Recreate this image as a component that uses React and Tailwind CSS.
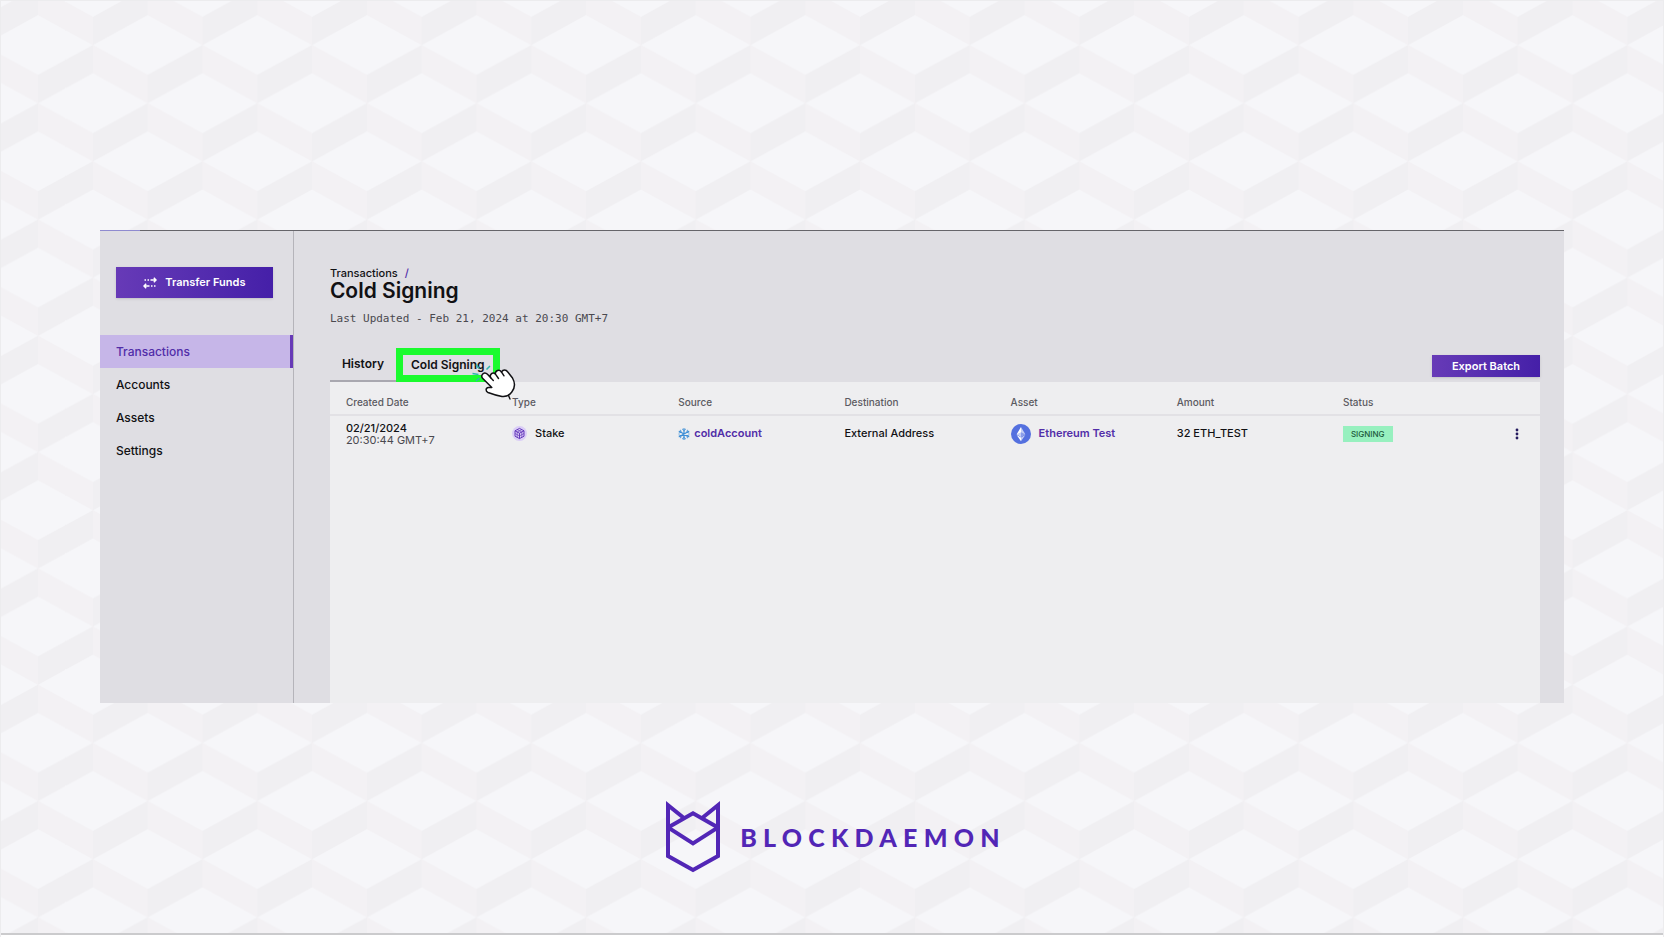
import { useState } from "react"

const navItems = ["Transactions", "Accounts", "Assets", "Settings"]

const columns = ["Created Date", "Type", "Source", "Destination", "Asset", "Amount", "Status"]

const transactions = [
  {
    date: "02/21/2024",
    time: "20:30:44 GMT+7",
    type: "Stake",
    source: "coldAccount",
    destination: "External Address",
    asset: "Ethereum Test",
    amount: "32 ETH_TEST",
    status: "SIGNING",
  },
]

function CubeBackdrop() {
  return (
    <svg className="absolute inset-0 h-full w-full" aria-hidden="true">
      <defs>
        <pattern id="cubes" x="91.9" y="14" width="109.6" height="116.3" patternUnits="userSpaceOnUse">
          <rect width="109.6" height="116.3" fill="#f6f6f9" />
          <path d="M0 30 54.8 60V88.2L0 58.2Z" fill="#f3f1f4" />
          <path d="M54.8 60 109.6 30V58.2L54.8 88.2Z" fill="#f0eff2" />
          <path d="M54.8 88.2 109.6 118.2V146.4L54.8 116.4Z" fill="#f3f1f4" />
          <path d="M0 118.2 54.8 88.2V116.4L0 146.4Z" fill="#f0eff2" />
          <path d="M54.8 -28.1 109.6 1.9V30L54.8 0Z" fill="#f3f1f4" />
          <path d="M0 1.9 54.8 -28.1V0L0 30Z" fill="#f0eff2" />
        </pattern>
      </defs>
      <rect width="100%" height="100%" fill="url(#cubes)" />
    </svg>
  )
}

function TransferIcon() {
  return (
    <svg width="14" height="12" viewBox="0 0 14 12" fill="none" stroke="white" strokeWidth="1.5" aria-hidden="true">
      <path d="M7.5 3H13M10.8 0.8 13 3 10.800 5.200" />
      <path d="M6.500 9H1M3.200 6.800 1 9l2.200 2.200" />
      <path d="M1.500 3H3M4.500 3H6M8 9H9.500M11 9H12.500" />
    </svg>
  )
}

function StakeIcon() {
  return (
    <svg width="15" height="15" viewBox="0 0 15 15" fill="none" aria-hidden="true">
      <circle cx="7.5" cy="7.5" r="7.5" fill="#dacdf6" />
      <g stroke="#5a2bb5" strokeWidth="0.9" strokeLinejoin="round">
        <path d="M7.5 2.4 12 4.8V10.2L7.5 12.6 3 10.2V4.8Z" />
        <path d="M3 4.8 7.5 7.2 12 4.8M7.5 7.2V12.6" />
        <path d="M5.2 3.6 9.8 6V11.4M9.8 3.6 5.2 6V11.4M3 7.5 7.5 9.9 12 7.5" strokeWidth="0.6" />
      </g>
    </svg>
  )
}

function SnowflakeIcon() {
  return (
    <svg width="12" height="12" viewBox="0 0 12 12" fill="none" stroke="#3f8fd6" strokeLinecap="round" aria-hidden="true">
      <path d="M6 0.6V11.4M1.2 3.3 10.8 8.7M10.8 3.3 1.2 8.7" strokeWidth="1.2" />
      <path
        d="M4.4 1.2 6 2.6 7.6 1.2M4.4 10.8 6 9.4 7.6 10.8M1 5 3.1 4.3 2.6 2.2M11 7 8.9 7.7 9.4 9.8M11 5 8.9 4.3 9.4 2.2M1 7 3.1 7.7 2.6 9.8"
        strokeWidth="0.9"
      />
    </svg>
  )
}

function EthereumIcon() {
  return (
    <svg width="20" height="20" viewBox="0 0 20 20" aria-hidden="true">
      <circle cx="10" cy="10" r="10" fill="#5470df" />
      <path d="M10 3 5.7 10.2 10 12.7Z" fill="white" />
      <path d="M10 3 14.3 10.2 10 12.7Z" fill="#c4cef5" />
      <path d="M10 8.2 5.7 10.2 10 12.7Z" fill="#c4cef5" />
      <path d="M10 8.2 14.3 10.2 10 12.7Z" fill="#8a9dea" />
      <path d="M10 13.6 5.7 11.1 10 17.2Z" fill="white" />
      <path d="M10 13.6 14.3 11.1 10 17.2Z" fill="#c4cef5" />
    </svg>
  )
}

function HandPointer() {
  return (
    <svg className="pointer-events-none absolute top-4 left-[75px] z-10" width="46" height="38" viewBox="0 0 46 38" fill="none" aria-hidden="true">
      <path d="M1.5 9.5 7.5 10.5M5 17 8.5 14M5 0.5 8 4.5M19 2 15.500 5.5" stroke="#2fb5ae" strokeWidth="1.5" />
      <path
        d="M11 11C12.3 8.300 14.8 8.300 16.500 10.3L19.7 13.800C18.300 10.5 21.300 7.800 24.300 9.800C24.300 6.300 28.300 5 30.5 8C32 5.300 35 5.300 36.800 8L41.5 14C44 18.500 44 24 40.800 28C38 31.800 35 33 31 32.5C25.500 31.500 21 30 17 28.5C14.500 27.300 14.300 24 17.500 23.500L20.800 23.500L11.800 14.5C10.800 13.500 10.500 12.3 11 11Z"
        fill="white"
        stroke="#111114"
        strokeWidth="1.500"
        strokeLinejoin="round"
      />
      <path d="M19.7 13.8 22.300 16.5M24.300 9.800 27.500 14.5M30.500 8 33 11.8M37.500 31.5 39 35" stroke="#111114" strokeWidth="1.400" strokeLinecap="round" />
    </svg>
  )
}

function BrandMark() {
  return (
    <svg width="54" height="72" viewBox="0 0 54 72" fill="none" stroke="#5226b6" strokeWidth="4" aria-hidden="true">
      <path d="M18.5 17.5 2 4.2V55L27 69 52 55V4.2L35.5 17.5" strokeMiterlimit="10" />
      <path d="M2 26.5 27 12.3 52 26.5 27 42.5Z" />
    </svg>
  )
}

export default function App() {
  const [activeNav, setActiveNav] = useState("Transactions")

  return (
    <div className="relative flex min-h-screen flex-col items-center border border-b-0 border-[#ececee] bg-[#f6f6f9] pt-[229px] font-['Inter',sans-serif] text-[#111114]">
      <CubeBackdrop />

      <div className="relative flex min-h-[473px] w-[88.1%] border-t border-[#66656a] bg-[#dfdee3]">
        {/* Loading progress */}
        <div className="absolute -top-px left-0 h-px w-10 bg-[#8f8bd0]"></div>

        {/* Sidebar */}
        <aside className="w-[194px] shrink-0 border-r border-[#b5b4ba]">
          <div className="pt-9 pr-5 pl-4">
            <button className="flex h-[31px] w-full items-center justify-center gap-2 bg-linear-to-r from-[#673ab7] to-[#451fa8] text-[11px] font-semibold text-white shadow-sm">
              <TransferIcon />
              Transfer Funds
            </button>
          </div>
          <nav className="mt-[37px] flex flex-col">
            {navItems.map((item) => (
              <a
                key={item}
                href="#"
                onClick={() => setActiveNav(item)}
                className={
                  item === activeNav
                    ? "border-r-3 border-[#673ab7] bg-[#c6b6e8] px-4 text-[12px] leading-[33px] font-medium text-[#512da8]"
                    : "px-4 text-[12px] leading-[33px] font-medium"
                }
              >
                {item}
              </a>
            ))}
          </nav>
        </aside>

        {/* Content */}
        <main className="flex min-w-0 flex-1 flex-col pt-9 pr-6 pl-9">
          <div className="text-[11px] leading-3 font-medium">
            Transactions <span className="ml-1 text-[#512da8]">/</span>
          </div>
          <h1 className="text-[21px] leading-6 font-semibold">Cold Signing</h1>
          <p className="mt-2 font-['DejaVu_Sans_Mono',monospace] text-[11px] leading-4 text-[#4a494f]">
            Last Updated - Feb 21, 2024 at 20:30 GMT+7
          </p>

          <div className="mt-[21px] flex items-start justify-between">
            <div className="flex">
              <button className="h-[34px] border-b-2 border-[#a9a8b0] px-3 text-[12px] font-semibold">History</button>
              <div className="relative">
                <button className="h-[34px] border-[7px] border-[#1afb2e] px-2 text-[12px] leading-4 font-semibold">Cold Signing</button>
                <HandPointer />
              </div>
            </div>
            <button className="mt-[7px] h-[22px] bg-linear-to-r from-[#673ab7] to-[#451fa8] px-5 text-[11px] font-semibold text-white shadow-sm">
              Export Batch
            </button>
          </div>

          <div className="flex-1 bg-[#eeeef0]">
            <table className="w-full table-fixed text-left">
              <thead>
                <tr className="h-[33px] border-b-2 border-[#e2e1e5] text-[10px] text-[#5b5a61]">
                  {columns.map((column) => (
                    <th key={column} className="pt-2 pl-4 font-medium">
                      {column}
                    </th>
                  ))}
                  <th className="w-[47px]" aria-label="Actions"></th>
                </tr>
              </thead>
              <tbody>
                {transactions.map((tx) => (
                  <tr key={tx.time} className="h-9 text-[11px] font-medium">
                    <td className="pl-4 leading-3">
                      {tx.date}
                      <div className="font-normal text-[#4a494f]">{tx.time}</div>
                    </td>
                    <td className="pl-4">
                      <div className="flex items-center gap-2">
                        <StakeIcon />
                        {tx.type}
                      </div>
                    </td>
                    <td className="pl-4">
                      <a href="#" className="flex items-center gap-1 font-semibold text-[#512da8]">
                        <SnowflakeIcon />
                        {tx.source}
                      </a>
                    </td>
                    <td className="pl-4">{tx.destination}</td>
                    <td className="pl-4">
                      <a href="#" className="flex items-center gap-2 font-semibold text-[#512da8]">
                        <EthereumIcon />
                        {tx.asset}
                      </a>
                    </td>
                    <td className="pl-4">{tx.amount}</td>
                    <td className="pl-4">
                      <span className="block w-fit bg-[#97f0bf] px-2 text-[8px] leading-4 text-[#1d5a3c]">{tx.status}</span>
                    </td>
                    <td>
                      <button className="mx-auto block" aria-label="Row actions">
                        <svg width="4" height="12" viewBox="0 0 4 12" fill="#241a5e">
                          <circle cx="2" cy="2" r="1.4" />
                          <circle cx="2" cy="6" r="1.4" />
                          <circle cx="2" cy="10" r="1.4" />
                        </svg>
                      </button>
                    </td>
                  </tr>
                ))}
              </tbody>
            </table>
          </div>
        </main>
      </div>

      {/* Brand */}
      <footer className="relative mt-[98px] flex items-center gap-5 pl-2 text-[#5226b6]">
        <BrandMark />
        <span className="font-['Lato',sans-serif] text-[25px] leading-8 font-black tracking-[0.25em]">BLOCKDAEMON</span>
      </footer>

      <div className="relative mt-auto h-[4px] w-full border-t-2 border-[#cbcbcd] bg-white"></div>
    </div>
  )
}
